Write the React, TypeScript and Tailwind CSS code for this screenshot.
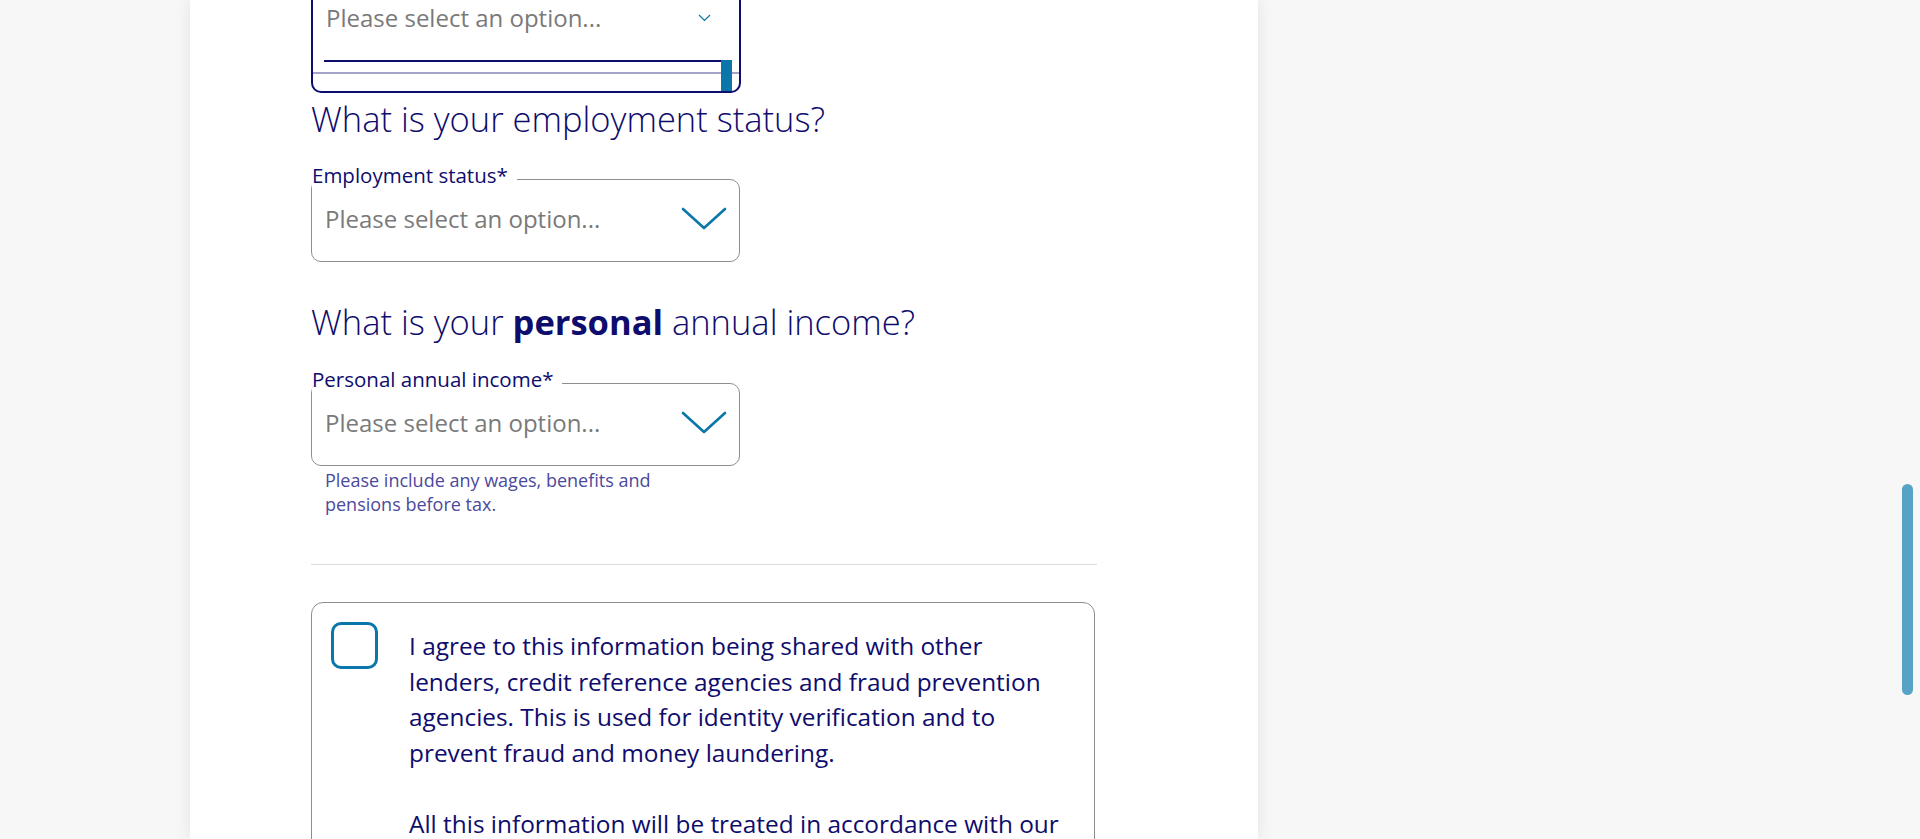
import { ReactNode } from "react";

const navy = "text-[#0e0c6c]";

function Chevron() {
    return (
        <svg width="46" height="24" viewBox="0 0 46 24" fill="none">
            <polyline points="2,2 23,21 44,2" stroke="#0a76a9" strokeWidth="2.6" strokeLinecap="round" strokeLinejoin="round" />
        </svg>
    );
}

function SelectField({ label, children }: { label: string; children?: ReactNode }) {
    return (
        <div>
            <fieldset className="w-[429px] rounded-[10px] border border-[#8e8e8e]">
                <legend className={`pr-[9px] pb-[8px] text-[20.5px] leading-[22px] ${navy}`}>{label}</legend>
                <div className="h-[67px] flex items-start justify-between pl-[13px] pr-[12px] pt-[11px]">
                    <span className="text-[24px] leading-7 text-[#7a7a7a]">Please select an option...</span>
                    <span className="mt-[2px]">
                        <Chevron />
                    </span>
                </div>
            </fieldset>
            {children}
        </div>
    );
}

export default function App() {
    return (
        <div className="h-[839px] overflow-hidden bg-[#f7f7f7] font-['Open_Sans',sans-serif] relative">
            <div className="ml-[190px] w-[1068px] h-[839px] bg-white shadow-[0_0_16px_rgba(0,0,0,0.09)]">
                <div className="pl-[121px] w-[907px]">
                    {/* open dropdown, cut by scroll */}
                    <div className="relative w-[430px] h-[93px] border-2 border-t-0 border-[#0e0c6c] rounded-b-[10px]">
                        <div className="h-[36px] flex items-center justify-between pl-[13px] pr-[28px]">
                            <span className="text-[24px] leading-7 text-[#7a7a7a]">Please select an option...</span>
                            <svg width="13" height="8" viewBox="0 0 13 8" fill="none">
                                <polyline points="1,1 6.5,6.5 12,1" stroke="#0a76a9" strokeWidth="1.2" />
                            </svg>
                        </div>
                        <div className="ml-[11px] mr-[8px] mt-[24px] h-[2px] bg-[#0e0c6c]" />
                        <div className="mt-[10px] h-[2px] bg-[#a4a4c8]" />
                        <div className="absolute right-[7px] top-[60px] w-[11px] h-[31px] bg-[#0a76a9]" />
                    </div>

                    <h2 className={`mt-[6px] text-[34.5px] leading-10 font-light ${navy}`}>What is your employment status?</h2>

                    <div className="mt-[25px]">
                        <SelectField label="Employment status*" />
                    </div>

                    <h2 className={`mt-[40px] text-[34.5px] leading-10 font-light ${navy}`}>
                        What is your <span className="font-bold">personal</span> annual income?
                    </h2>

                    <div className="mt-[26px]">
                        <SelectField label="Personal annual income*">
                            <p className="mt-[2px] pl-[14px] text-[18px] leading-6 text-[#4b4a9c]">
                                Please include any wages, benefits and
                                <br />
                                pensions before tax.
                            </p>
                        </SelectField>
                    </div>

                    <div className="mt-[48px] h-px bg-[#dcdcdc]" />

                    <div className="mt-[37px] w-[784px] rounded-[12px] border-[1.5px] border-[#8e8e8e] flex pl-[19px] pt-[19px] pb-10">
                        <div className="shrink-0 w-[47px] h-[47px] rounded-[10px] border-[3px] border-[#0a76a9]" />
                        <p className={`ml-[31px] mt-[6px] text-[24.4px] leading-[35.5px] ${navy}`}>
                            I agree to this information being shared with other
                            <br />
                            lenders, credit reference agencies and fraud prevention
                            <br />
                            agencies. This is used for identity verification and to
                            <br />
                            prevent fraud and money laundering.
                            <br />
                            <br />
                            All this information will be treated in accordance with our
                        </p>
                    </div>
                </div>
            </div>

            {/* page scrollbar */}
            <div className="absolute right-[7px] top-[484px] w-[11px] h-[211px] rounded-full bg-[#57a3c6]" />
        </div>
    );
}
